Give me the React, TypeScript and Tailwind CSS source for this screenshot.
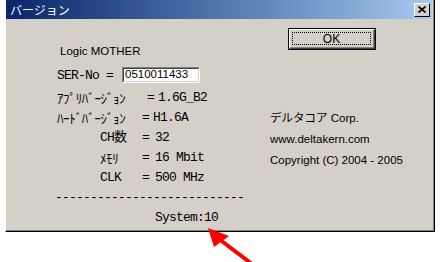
import React from "react";

const MONO = "font-['Liberation_Mono','Noto_Sans_CJK_JP',monospace] text-[13px] tracking-[-0.8px] text-black";
const UI = "font-['Liberation_Sans','Noto_Sans_CJK_JP',sans-serif] text-[11.5px] text-black";
const KANA = "font-['Noto_Sans_CJK_JP',sans-serif] text-[13px] tracking-[-0.4px] leading-none -mt-[1px]";

type Row = { label: string; kana?: boolean; pad: string; labelW: string; eqW: string; value: string };

const ROWS: Row[] = [
  { label: "ｱﾌﾟﾘﾊﾞｰｼﾞｮﾝ", kana: true, pad: "pl-[51px]", labelW: "w-[90px]", eqW: "w-[11px]", value: "1.6G_B2" },
  { label: "ﾊｰﾄﾞﾊﾞｰｼﾞｮﾝ", kana: true, pad: "pl-[51px]", labelW: "w-[85px]", eqW: "w-[11px]", value: "H1.6A" },
  { label: "CH数", pad: "pl-[94px]", labelW: "w-[42px]", eqW: "w-[13px]", value: "32" },
  { label: "ﾒﾓﾘ", kana: true, pad: "pl-[94px]", labelW: "w-[42px]", eqW: "w-[13px]", value: "16 Mbit" },
  { label: "CLK", pad: "pl-[94px]", labelW: "w-[42px]", eqW: "w-[13px]", value: "500 MHz" },
];

export default function App() {
  return (
    <div className="relative w-[441px] h-[262px] bg-white overflow-hidden">
      {/* dialog window */}
      <div className="ml-[5px] w-[430px] h-[232px] flex flex-col bg-[#d4d0c8] border-l border-l-white border-r border-r-black border-b border-b-black">
        <div className="flex-1 flex flex-col border-r border-r-[#808080] border-b border-b-[#808080]">
          {/* title bar */}
          <div className="h-[19px] mr-[1px] flex items-center justify-between pl-[4px] pr-[2px] bg-gradient-to-r from-[#0a246a] to-[#a6caf0]">
            <span className="font-['Noto_Sans_CJK_JP',sans-serif] text-[12px] text-white leading-none">バージョン</span>
            <div className="w-[16px] h-[14px] bg-[#d4d0c8] border border-t-white border-l-white border-r-black border-b-black flex items-center justify-center">
              <svg width="8" height="7" viewBox="0 0 8 7">
                <path d="M0.5 0.5 L7.5 6.5 M7.5 0.5 L0.5 6.5" stroke="black" strokeWidth="1.6" />
              </svg>
            </div>
          </div>

          {/* client area */}
          <div className="flex-1 flex">
            {/* left column */}
            <div className="w-[256px] flex flex-col">
              <div className={`${UI} pl-[54px] mt-[25px] h-[14px] leading-[14px]`}>Logic MOTHER</div>

              <div className="mt-[9px] h-[16px] flex items-center pl-[51px]">
                <span className={`${MONO} w-[65px] leading-[16px] pt-[2px]`}>SER-No =</span>
                <div className="w-[78px] h-[16px] border border-t-[#808080] border-l-[#808080] border-r-white border-b-white">
                  <div className="h-full bg-white border border-t-[#404040] border-l-[#404040] border-r-[#d4d0c8] border-b-[#d4d0c8] flex items-center pl-[1px]">
                    <span className={`${UI} leading-none`}>0510011433</span>
                  </div>
                </div>
              </div>

              <div className="mt-[5px] flex flex-col">
                {ROWS.map((r) => (
                  <div key={r.label} className={`h-[20px] flex items-center ${r.pad} ${MONO}`}>
                    <span className={`${r.labelW} whitespace-pre ${r.kana ? KANA : ""}`}>{r.label}</span>
                    <span className={r.eqW}>=</span>
                    <span className="whitespace-pre">{r.value}</span>
                  </div>
                ))}
                <div className={`h-[20px] flex items-center pl-[49px] ${MONO}`}>---------------------------</div>
                <div className={`h-[20px] flex items-center pl-[149px] ${MONO}`}>System:10</div>
              </div>
            </div>

            {/* right column */}
            <div className="flex-1 flex flex-col">
              <div className="mt-[9px] ml-[26px] w-[88px] h-[22px] border border-black">
                <div className="h-full border border-t-white border-l-white border-r-[#404040] border-b-[#404040]">
                  <div className="h-full p-[2px] border-r border-b border-r-[#808080] border-b-[#808080]">
                    <div className="h-full border border-dotted border-black flex items-center justify-center">
                      <span className={`${UI} text-[12px] leading-none`}>OK</span>
                    </div>
                  </div>
                </div>
              </div>
              <div className={`${UI} ml-[8px] mt-[58px] leading-[21px] flex flex-col`}>
                <span>デルタコア Corp.</span>
                <span>www.deltakern.com</span>
                <span>Copyright (C) 2004 - 2005</span>
              </div>
            </div>
          </div>
        </div>
      </div>

      {/* red annotation arrow */}
      <svg className="absolute left-0 top-0 pointer-events-none" width="441" height="262" viewBox="0 0 441 262">
        <line x1="219" y1="239" x2="252" y2="264" stroke="#ff0000" strokeWidth="4" />
        <polygon points="208,228 229,236 214,247" fill="#ff0000" />
      </svg>
    </div>
  );
}
